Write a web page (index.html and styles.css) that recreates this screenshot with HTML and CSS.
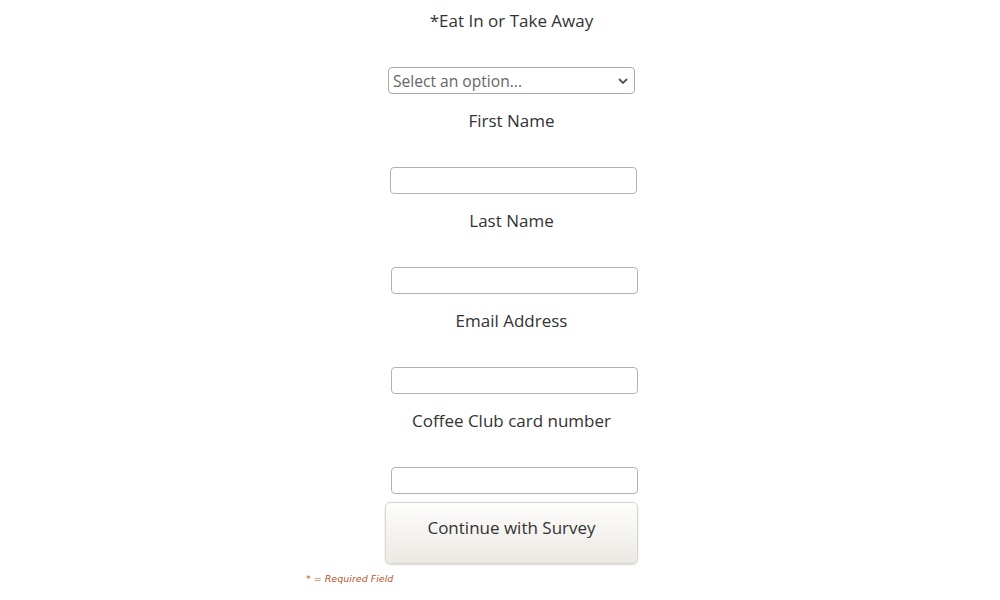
FILE: index.html
```html
<!DOCTYPE html>
<html lang="en">
<head>
  <meta charset="UTF-8">
  <meta name="viewport" content="width=device-width, initial-scale=1.0">
  <title>Coffee Club Survey</title>
  <link rel="stylesheet" href="styles.css">
</head>
<body>
  <div class="page">
    <form class="survey-form" id="form">
      <div class="form-group">
        <label for="eat-in">*Eat In or Take Away</label>
        <select id="eat-in" class="select-input">
          <option>Select an option...</option>
          <option>Eat In</option>
          <option>Take Away</option>
        </select>
      </div>
      <div class="form-group">
        <label for="first-name">First Name</label>
        <input type="text" id="first-name" class="text-input">
      </div>
      <div class="form-group shift">
        <label for="last-name">Last Name</label>
        <input type="text" id="last-name" class="text-input">
      </div>
      <div class="form-group shift">
        <label for="email">Email Address</label>
        <input type="email" id="email" class="text-input">
      </div>
      <div class="form-group shift">
        <label for="card-number">Coffee Club card number</label>
        <input type="text" id="card-number" class="text-input">
      </div>
      <button type="submit" class="submit-btn">Continue with Survey</button>
      <p class="required-note">* = Required Field</p>
    </form>
  </div>
</body>
</html>
```

FILE: styles.css
```css
body {
  font-family: "Open Sans", Arial, sans-serif;
  margin: 0;
  padding: 0;
  background-color: #fff;
  color: #333;
}

.page {
  display: flex;
  justify-content: center;
  padding-left: 24px;
}

.survey-form {
  width: 412px;
  display: flex;
  flex-direction: column;
  align-items: center;
}

.form-group {
  height: 100px;
  width: 100%;
  display: flex;
  flex-direction: column;
  align-items: center;
}

.form-group label {
  display: block;
  font-size: 17px;
  line-height: 22px;
  margin-top: 10px;
  height: 57px;
  margin-right: 1px;
  color: #333;
}

.form-group.shift .text-input {
  margin-left: 4px;
}

.text-input {
  box-sizing: border-box;
  width: 247px;
  height: 27px;
  border: 1px solid #b3b3b3;
  border-radius: 4px;
  font-size: 15px;
  background: #fff;
  margin-left: 2px;
}

.text-input:focus,
.select-input:focus {
  outline: none;
  border-color: #888;
}

.select-input {
  box-sizing: border-box;
  width: 247px;
  height: 27px;
  margin-left: -1px;
  padding: 0 4px;
  border: 1px solid #a9a9a9;
  border-radius: 4px;
  font-family: "Open Sans", Arial, sans-serif;
  font-size: 15.6px;
  color: #666;
  background-color: #fff;
  appearance: none;
  -webkit-appearance: none;
  background-image: url("data:image/svg+xml,%3Csvg xmlns='http://www.w3.org/2000/svg' width='10' height='6' viewBox='0 0 10 6'%3E%3Cpath d='M1 1l4 4 4-4' fill='none' stroke='%23555' stroke-width='1.8'/%3E%3C/svg%3E");
  background-repeat: no-repeat;
  background-position: right 6px center;
}

.submit-btn {
  width: 253px;
  height: 62px;
  margin-top: 2px;
  margin-right: 1px;
  padding: 0 0 12px;
  font-family: "Open Sans", Arial, sans-serif;
  font-size: 17px;
  color: #333;
  background: linear-gradient(#fdfdfc, #ece9e3);
  border: 1px solid #d6d6d6;
  border-radius: 5px;
  box-shadow: 0 1px 2px rgba(0, 0, 0, 0.15);
  cursor: pointer;
}

.submit-btn:hover {
  background: linear-gradient(#f5f4f1, #e2ded6);
}

.required-note {
  align-self: flex-start;
  margin: 9px 0 0;
  font-family: "DejaVu Sans", Verdana, sans-serif;
  font-size: 9.5px;
  line-height: 11px;
  font-style: italic;
  color: #b9582c;
}
```
